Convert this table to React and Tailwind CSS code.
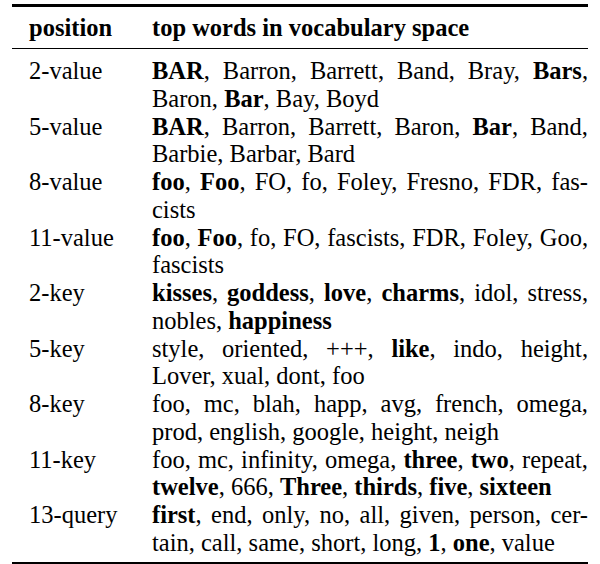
import React from "react";

const B = ({ children }) => <span className="font-bold">{children}</span>;

const rows = [
  {
    pos: "2-value",
    l1: (<><B>BAR</B>, Barron, Barrett, Band, Bray, <B>Bars</B>,</>),
    l2: (<>Baron, <B>Bar</B>, Bay, Boyd</>),
  },
  {
    pos: "5-value",
    l1: (<><B>BAR</B>, Barron, Barrett, Baron, <B>Bar</B>, Band,</>),
    l2: (<>Barbie, Barbar, Bard</>),
  },
  {
    pos: "8-value",
    l1: (<><B>foo</B>, <B>Foo</B>, FO, fo, Foley, Fresno, FDR, fas-</>),
    l2: (<>cists</>),
  },
  {
    pos: "11-value",
    l1: (<><B>foo</B>, <B>Foo</B>, fo, FO, fascists, FDR, Foley, Goo,</>),
    l2: (<>fascists</>),
  },
  {
    pos: "2-key",
    l1: (<><B>kisses</B>, <B>goddess</B>, <B>love</B>, <B>charms</B>, idol, stress,</>),
    l2: (<>nobles, <B>happiness</B></>),
  },
  {
    pos: "5-key",
    l1: (<>style, oriented, +++, <B>like</B>, indo, height,</>),
    l2: (<>Lover, xual, dont, foo</>),
  },
  {
    pos: "8-key",
    l1: (<>foo, mc, blah, happ, avg, french, omega,</>),
    l2: (<>prod, english, google, height, neigh</>),
  },
  {
    pos: "11-key",
    l1: (<>foo, mc, infinity, omega, <B>three</B>, <B>two</B>, repeat,</>),
    l2: (<><B>twelve</B>, 666, <B>Three</B>, <B>thirds</B>, <B>five</B>, <B>sixteen</B></>),
  },
  {
    pos: "13-query",
    l1: (<><B>first</B>, end, only, no, all, given, person, cer-</>),
    l2: (<>tain, call, same, short, long, <B>1</B>, <B>one</B>, value</>),
  },
];

export default function App() {
  return (
    <div className="w-[600px] h-[564px] bg-white text-black px-[12px] pt-[4px] text-[24.5px] leading-[27.75px] overflow-hidden font-['Liberation_Serif','Times_New_Roman',serif]">
      <div className="h-[2.5px] bg-black" />
      <div className="grid grid-cols-[140px_1fr] pt-[7.5px] pb-[6.5px] font-bold">
        <div className="pl-[17px]">position</div>
        <div>top words in vocabulary space</div>
      </div>
      <div className="h-[1.2px] bg-black" />
      <div className="pt-[7.8px] pb-[5.5px] flex flex-col">
        {rows.map((r) => (
          <div key={r.pos} className="grid grid-cols-[140px_1fr]">
            <div className="pl-[17px]">{r.pos}</div>
            <div>
              <div className="text-justify [text-align-last:justify]">{r.l1}</div>
              <div>{r.l2}</div>
            </div>
          </div>
        ))}
      </div>
      <div className="h-[2.5px] bg-black" />
    </div>
  );
}
